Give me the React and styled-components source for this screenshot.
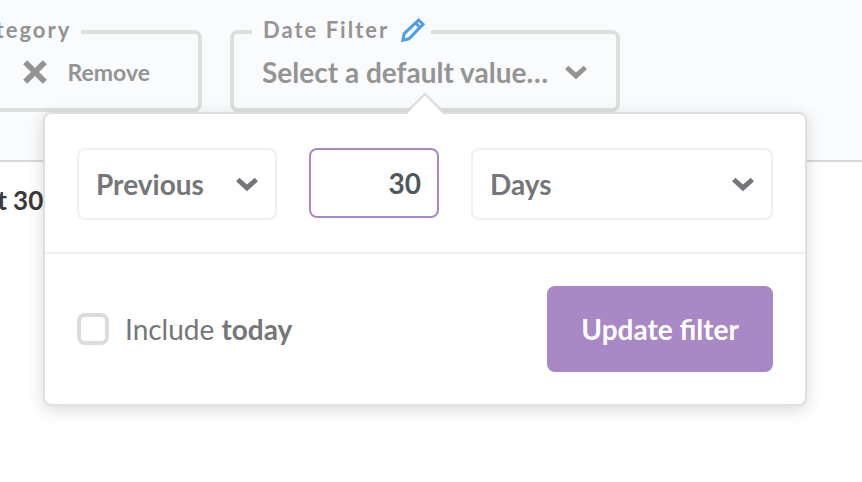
import React, { useState } from 'react'
import styled, { createGlobalStyle } from 'styled-components'

const GlobalStyle = createGlobalStyle`
    body {
        margin: 0;
        min-height: 100vh;
        background: #fff;
        font-family: Lato, 'Open Sans', sans-serif;
        overflow-x: hidden;
    }

    *, *::before, *::after {
        box-sizing: border-box;
    }

    button, input, select {
        font-family: inherit;
    }
`

const Toolbar = styled.header`
    display: flex;
    gap: 28px;
    margin-left: -67px;
    padding: 14px 28px 48px 0;
    background: #f9fbfd;
    border-bottom: 2px solid #d8d8d8;
`

const Field = styled.div`
    position: relative;
`

const Fieldset = styled.fieldset`
    min-width: ${props => props.$minWidth || 0};
    margin: 0;
    padding: 0 18px 14px;
    border: 4px solid #dedfdf;
    border-radius: 8px;
`

const Legend = styled.legend`
    display: flex;
    align-items: center;
    gap: 12px;
    padding: 0 ${props => props.$tight ? 6 : 10}px 4px 11px;
    color: #949494;
    font-size: 22px;
    font-weight: 700;
    line-height: 32px;
    letter-spacing: 2px;
`

const EditButton = styled.button`
    display: flex;
    padding: 0;
    border: 0;
    background: none;
    color: #509ee3;
    cursor: pointer;
`

const FieldButton = styled.button`
    display: flex;
    align-items: center;
    gap: 16px;
    height: 44px;
    margin-left: auto;
    padding: 0 10px;
    border: 0;
    background: none;
    color: #949494;
    font-size: 28px;
    font-weight: 700;
    white-space: nowrap;
    cursor: pointer;
`

const RemoveButton = styled(FieldButton)`
    gap: 21px;
    padding-right: 30px;
    font-size: 23px;
`

const Popover = styled.form`
    position: absolute;
    top: 98px;
    left: 50%;
    z-index: 10;
    width: max-content;
    transform: translateX(-50%);
    background: #fff;
    border: 2px solid #dfdfdf;
    border-radius: 8px;
    box-shadow: 0 4px 16px rgba(0, 0, 0, 0.15);
`

const Arrow = styled.svg`
    position: absolute;
    top: -22px;
    left: 50%;
    transform: translateX(-50%);
`

const Row = styled.div`
    display: flex;
    align-items: flex-start;
    gap: 32px;
    padding: 34px 32px 32px;
    border-bottom: 2px solid #f0f0f0;
`

const SelectBox = styled.div`
    display: grid;
    align-items: center;
    width: ${props => props.$wide ? 302 : 200}px;
    color: #74767a;

    > * {
        grid-area: 1 / 1;
    }

    svg {
        justify-self: end;
        margin-right: 18px;
        pointer-events: none;
    }
`

const Select = styled.select`
    width: 100%;
    height: 72px;
    padding: 0 17px;
    appearance: none;
    background: #fff;
    border: 2px solid #f0f0f0;
    border-radius: 8px;
    color: inherit;
    font-size: 28px;
    font-weight: 700;
`

const NumberInput = styled.input`
    width: 130px;
    height: 70px;
    padding: 0 16px;
    border: 2px solid #a989c5;
    border-radius: 8px;
    outline: 0;
    color: #4f575e;
    font-size: 28px;
    font-weight: 700;
    text-align: right;
`

const Footer = styled.div`
    display: flex;
    align-items: center;
    justify-content: space-between;
    padding: 32px;
`

const CheckLabel = styled.label`
    display: flex;
    align-items: center;
    gap: 16px;
    color: #74767a;
    font-size: 28px;
`

const Checkbox = styled.input`
    width: 32px;
    height: 32px;
    margin: 0;
    appearance: none;
    background: #fff;
    border: 4px solid #dcdcdc;
    border-radius: 8px;

    &:checked {
        background: #a989c5;
    }
`

const SubmitButton = styled.button`
    height: 86px;
    padding: 0 34px;
    border: 0;
    border-radius: 8px;
    background: #a989c5;
    color: #fff;
    font-size: 28px;
    font-weight: 700;
    cursor: pointer;
`

const CardTitle = styled.h2`
    margin: 22px 0 0 -41px;
    color: #3b3838;
    font-size: 26px;
    font-weight: 700;
    line-height: 32px;
`

const Chevron = () => (
    <svg width="24" height="16" viewBox="0 0 24 16" fill="none" stroke="currentColor" strokeWidth="5" aria-hidden="true">
        <path d="M2.7 3.5 12 11.8 21.3 3.5" />
    </svg>
)

const Cross = () => (
    <svg width="24" height="24" viewBox="0 0 24 24" fill="none" stroke="currentColor" strokeWidth="5.8" aria-hidden="true">
        <path d="M2.2 2.2 21.8 21.8M21.8 2.2 2.2 21.8" />
    </svg>
)

const Pencil = () => (
    <svg width="24" height="24" viewBox="0 0 24 24" fill="none" stroke="currentColor" strokeWidth="3" aria-hidden="true">
        <path d="M1.8 22.2 3.2 15.6 17.7 2 22 6.3 8 20.8Z" />
        <path d="M14 4.5 19.5 10" />
    </svg>
)

const App = () => {
    const [range, setRange] = useState('previous')
    const [amount, setAmount] = useState('30')
    const [unit, setUnit] = useState('days')
    const [includeToday, setIncludeToday] = useState(false)

    return (
        <>
            <GlobalStyle />
            <Toolbar>
                <Field>
                    <Fieldset $minWidth="269px">
                        <Legend>Category</Legend>
                        <RemoveButton type="button">
                            <Cross />
                            Remove
                        </RemoveButton>
                    </Fieldset>
                </Field>
                <Field>
                    <Fieldset>
                        <Legend $tight>
                            Date Filter
                            <EditButton type="button" aria-label="Edit filter"><Pencil /></EditButton>
                        </Legend>
                        <FieldButton type="button">
                            Select a default value…
                            <Chevron />
                        </FieldButton>
                    </Fieldset>
                    <Popover onSubmit={e => e.preventDefault()}>
                        <Arrow width="44" height="24" viewBox="0 0 44 24" aria-hidden="true">
                            <path d="M2 24 22 3 42 24Z" fill="#fff" />
                            <path d="M2 21.5 22 2 42 21.5" fill="none" stroke="#dcdcdc" strokeWidth="2" />
                        </Arrow>
                        <Row>
                            <SelectBox>
                                <Select aria-label="Range" value={range} onChange={e => setRange(e.target.value)}>
                                    <option value="previous">Previous</option>
                                </Select>
                                <Chevron />
                            </SelectBox>
                            <NumberInput
                                aria-label="Amount"
                                inputMode="numeric"
                                value={amount}
                                onChange={e => setAmount(e.target.value)}
                            />
                            <SelectBox $wide>
                                <Select aria-label="Unit" value={unit} onChange={e => setUnit(e.target.value)}>
                                    <option value="days">Days</option>
                                </Select>
                                <Chevron />
                            </SelectBox>
                        </Row>
                        <Footer>
                            <CheckLabel>
                                <Checkbox
                                    type="checkbox"
                                    checked={includeToday}
                                    onChange={e => setIncludeToday(e.target.checked)}
                                />
                                <span>Include <b>today</b></span>
                            </CheckLabel>
                            <SubmitButton type="submit">Update filter</SubmitButton>
                        </Footer>
                    </Popover>
                </Field>
            </Toolbar>
            <CardTitle>Last 30</CardTitle>
        </>
    )
}

export default App
